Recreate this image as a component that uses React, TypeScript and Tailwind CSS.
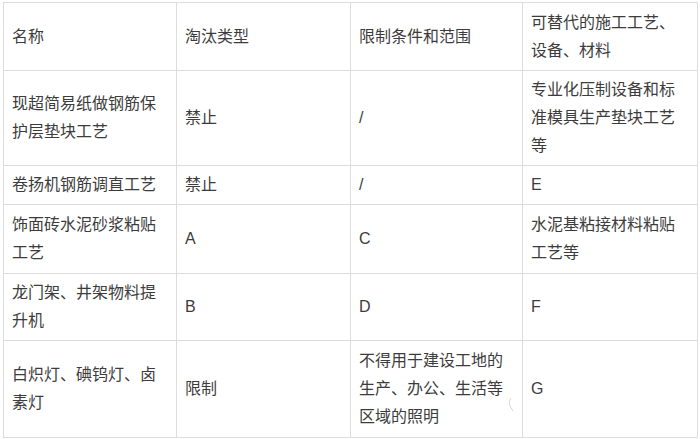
import React from "react";

const rows: string[][] = [
  ["名称", "淘汰类型", "限制条件和范围", "可替代的施工工艺、设备、材料"],
  ["现超简易纸做钢筋保护层垫块工艺", "禁止", "/", "专业化压制设备和标准模具生产垫块工艺等"],
  ["卷扬机钢筋调直工艺", "禁止", "/", "E"],
  ["饰面砖水泥砂浆粘贴工艺", "A", "C", "水泥基粘接材料粘贴工艺等"],
  ["龙门架、井架物料提升机", "B", "D", "F"],
  ["白炽灯、碘钨灯、卤素灯", "限制", "不得用于建设工地的生产、办公、生活等区域的照明", "G"],
];

export default function App() {
  return (
    <div
      className="relative w-[700px] h-[439px] bg-white pl-[3px] pt-[2px] text-[16px] leading-[28px] text-[#3c3c3c]"
      style={{ fontFamily: '"Liberation Sans", "Noto Sans CJK SC", sans-serif' }}
    >
      <table className="table-fixed border-collapse w-[694px]">
        <colgroup>
          <col className="w-[173px]" />
          <col className="w-[174px]" />
          <col className="w-[172px]" />
          <col className="w-[175px]" />
        </colgroup>
        <tbody>
          {rows.map((r, i) => (
            <tr
              key={i}
              className={
                i === 0
                  ? "h-[68px]"
                  : i === 1
                  ? "h-[95px]"
                  : i === 2
                  ? "h-[39px]"
                  : i === 3
                  ? "h-[69px]"
                  : i === 4
                  ? "h-[66px]"
                  : "h-[97px]"
              }
            >
              {r.map((c, j) => (
                <td
                  key={j}
                  className="border border-[#dcdcdc] pl-[8px] pr-[8px] py-[5px] align-middle break-all"
                >
                  {c}
                </td>
              ))}
            </tr>
          ))}
        </tbody>
      </table>
      <svg
        className="absolute left-[507px] top-[397px]"
        width="8"
        height="16"
        viewBox="0 0 8 16"
      >
        <path d="M4 1 Q1 5 3 9 L6 14" fill="none" stroke="#d8d8d8" strokeWidth="1" />
      </svg>
    </div>
  );
}
